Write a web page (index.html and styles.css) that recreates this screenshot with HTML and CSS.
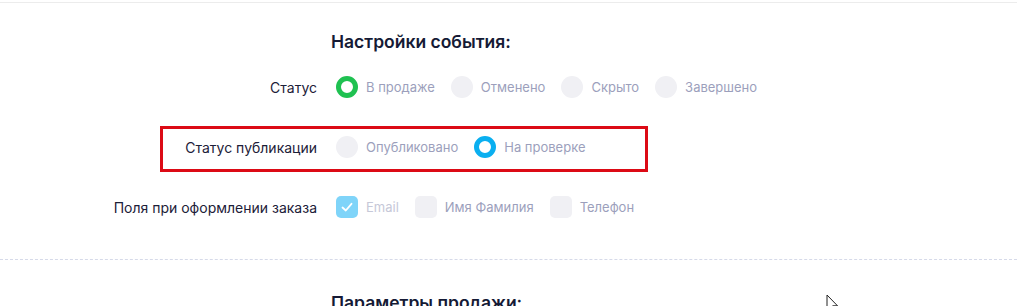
FILE: index.html
```html
<!DOCTYPE HTML>
<html>
<head>
	<title>Настройки события</title>
	<link rel="stylesheet" href="styles.css">
</head>
<body>

<div class="verh"></div>

<div class="razdel">
	<h2 class="zagolovok">Настройки события:</h2>

	<div class="stroka">
		<div class="metka">Статус</div>
		<div class="varianty">
			<label class="punkt"><span class="krug krug-zel"></span>В продаже</label>
			<label class="punkt"><span class="krug"></span>Отменено</label>
			<label class="punkt"><span class="krug"></span>Скрыто</label>
			<label class="punkt"><span class="krug"></span>Завершено</label>
		</div>
	</div>

	<div class="stroka vydelen">
		<div class="metka">Статус публикации</div>
		<div class="varianty">
			<label class="punkt"><span class="krug"></span>Опубликовано</label>
			<label class="punkt"><span class="krug krug-sin"></span>На проверке</label>
		</div>
	</div>

	<div class="stroka">
		<div class="metka">Поля при оформлении заказа</div>
		<div class="varianty">
			<label class="punkt otkl"><span class="flag flag-on">
				<svg width="14" height="14" viewBox="0 0 14 14"><polyline points="2.5,7.5 5.8,10.5 11.5,3.8" fill="none" stroke="#fff" stroke-width="1.8" stroke-linecap="round" stroke-linejoin="round"/></svg>
			</span>Email</label>
			<label class="punkt"><span class="flag"></span>Имя Фамилия</label>
			<label class="punkt"><span class="flag"></span>Телефон</label>
		</div>
	</div>
</div>

<div class="razdel razdel2">
	<h2 class="zagolovok">Параметры продажи:</h2>
	<svg class="kursor" width="14" height="20" viewBox="0 0 14 20"><path d="M1 1 L1 16 L4.5 12.5 L7.5 19 L9.5 18 L6.7 11.8 L11.5 11.8 Z" fill="#fff" stroke="#222" stroke-width="1" stroke-linejoin="round"/></svg>
</div>

</body>
</html>
```

FILE: styles.css
```css
body {
	margin: 0;
	background-color: #ffffff;
	font-family: Inter, "Noto Sans", sans-serif;
	overflow: hidden;
}

.verh {
	height: 2px;
	border-bottom: 1px solid #ececec;
}

.razdel {
	padding: 27px 0 41px 0;
	border-bottom: 1px dashed #d6dae9;
}

.razdel2 {
	position: relative;
	padding-top: 31px;
	border-bottom: none;
}

.zagolovok {
	margin: 0 0 22px 331px;
	font-size: 17.5px;
	line-height: 24px;
	font-weight: 600;
	color: #151a35;
}

.stroka {
	display: grid;
	grid-template-columns: 317px auto;
	column-gap: 19px;
	align-items: center;
	height: 22px;
	margin-bottom: 38px;
}

.stroka:last-child {
	margin-bottom: 0;
}

/* красная рамка вокруг строки */
.vydelen {
	position: relative;
}

.vydelen::after {
	content: "";
	position: absolute;
	left: 160px;
	top: -10px;
	width: 488px;
	height: 46px;
	box-sizing: border-box;
	border: 3px solid #dc0a15;
	pointer-events: none;
}

.metka {
	text-align: right;
	font-size: 14px;
	color: #1c2038;
}

.varianty {
	display: flex;
	align-items: center;
	gap: 16px;
}

.punkt {
	display: flex;
	align-items: center;
	gap: 8px;
	font-size: 13px;
	color: #9c9fbc;
}

.otkl {
	color: #c6c8d8;
}

.krug {
	width: 22px;
	height: 22px;
	border-radius: 50%;
	background-color: #f0f0f4;
	box-sizing: border-box;
}

.krug-zel {
	background-color: #fff;
	border: 5px solid #1fc151;
}

.krug-sin {
	background-color: #fff;
	border: 5px solid #0aaff0;
}

.flag {
	width: 22px;
	height: 22px;
	border-radius: 5px;
	background-color: #f0f0f4;
	display: flex;
	align-items: center;
	justify-content: center;
}

.flag-on {
	background-color: #7fd4f9;
}

.kursor {
	position: absolute;
	left: 826px;
	top: 34px;
}
```
